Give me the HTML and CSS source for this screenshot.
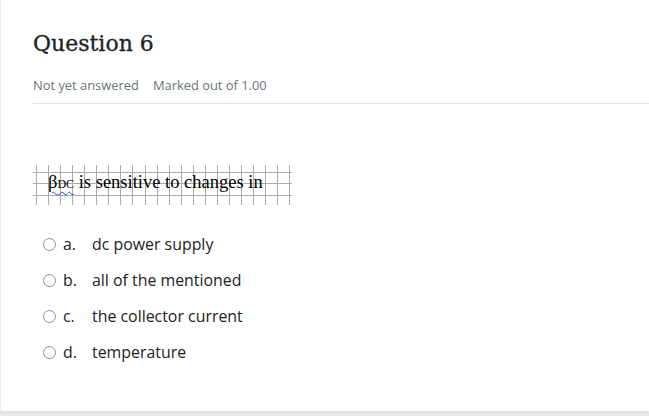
FILE: index.html
```html
<!DOCTYPE html>
<html>
<head>
<meta charset="utf-8">
<link rel="stylesheet" href="styles.css">
</head>
<body>
<div class="card">
  <h3 class="qno">Question 6</h3>
  <div class="meta"><span class="state">Not yet answered</span><span class="grade">Marked out of 1.00</span></div>
  <div class="content">
    <div class="qtext"><span class="beta">β<span class="sub">DC</span></span> is sensitive to changes in</div>
    <div class="answers">
      <label class="opt"><span class="radio"></span><span class="letter">a.</span><span class="txt">dc power supply</span></label>
      <label class="opt"><span class="radio"></span><span class="letter">b.</span><span class="txt">all of the mentioned</span></label>
      <label class="opt"><span class="radio"></span><span class="letter">c.</span><span class="txt">the collector current</span></label>
      <label class="opt"><span class="radio"></span><span class="letter">d.</span><span class="txt">temperature</span></label>
    </div>
  </div>
</div>
</body>
</html>
```
FILE: styles.css
```css
html, body {
  margin: 0;
  padding: 0;
  background: #e9e9e9;
}
body {
  width: 649px;
  height: 416px;
  overflow: hidden;
  font-family: "Open Sans", sans-serif;
}
.card {
  background: #fff;
  border-left: 1px solid #ececec;
  height: 411px;
  box-sizing: border-box;
  padding: 29px 0 0 32px;
  box-shadow: 0 2px 3px rgba(0, 0, 0, 0.04);
}
.qno {
  margin: 0;
  font-family: "DejaVu Serif", serif;
  font-weight: normal;
  font-size: 22px;
  line-height: 30px;
  color: #1d2125;
  -webkit-text-stroke: 0.3px #1d2125;
}
.meta {
  margin-top: 17px;
  font-size: 12.9px;
  line-height: 18px;
  color: #6a737b;
  padding-bottom: 9px;
  border-bottom: 1px solid #e6e6e6;
  display: flex;
  gap: 14px;
}
.content {
  padding-top: 61px;
}
.qtext {
  width: 259px;
  height: 40px;
  box-sizing: border-box;
  padding: 6px 0 0 15px;
  font-family: "Liberation Serif", serif;
  font-size: 18.5px;
  line-height: 22px;
  color: #000;
  background-image:
    repeating-linear-gradient(to right, #ababab 0 1px, transparent 1px 12.06px),
    linear-gradient(#ababab, #ababab),
    linear-gradient(#ababab, #ababab),
    linear-gradient(#ababab, #ababab);
  background-size: 100% 100%, 100% 1px, 100% 1px, 100% 1px;
  background-position: 3px 0, 0 7px, 0 18px, 0 30px;
  background-repeat: no-repeat;
}
.beta {
  text-decoration: underline wavy #2a4fe0;
  text-decoration-thickness: 1px;
  text-underline-offset: 3px;
}
.sub {
  font-size: 12px;
}
.answers {
  margin-top: 21px;
  display: flex;
  flex-direction: column;
}
.opt {
  display: flex;
  align-items: center;
  height: 36px;
  font-size: 15.9px;
  color: #1d2125;
  padding-left: 10px;
}
.radio {
  width: 11px;
  height: 11px;
  border: 1px solid #8a9099;
  border-radius: 50%;
  margin-right: 7px;
}
.letter {
  width: 29px;
}
```
